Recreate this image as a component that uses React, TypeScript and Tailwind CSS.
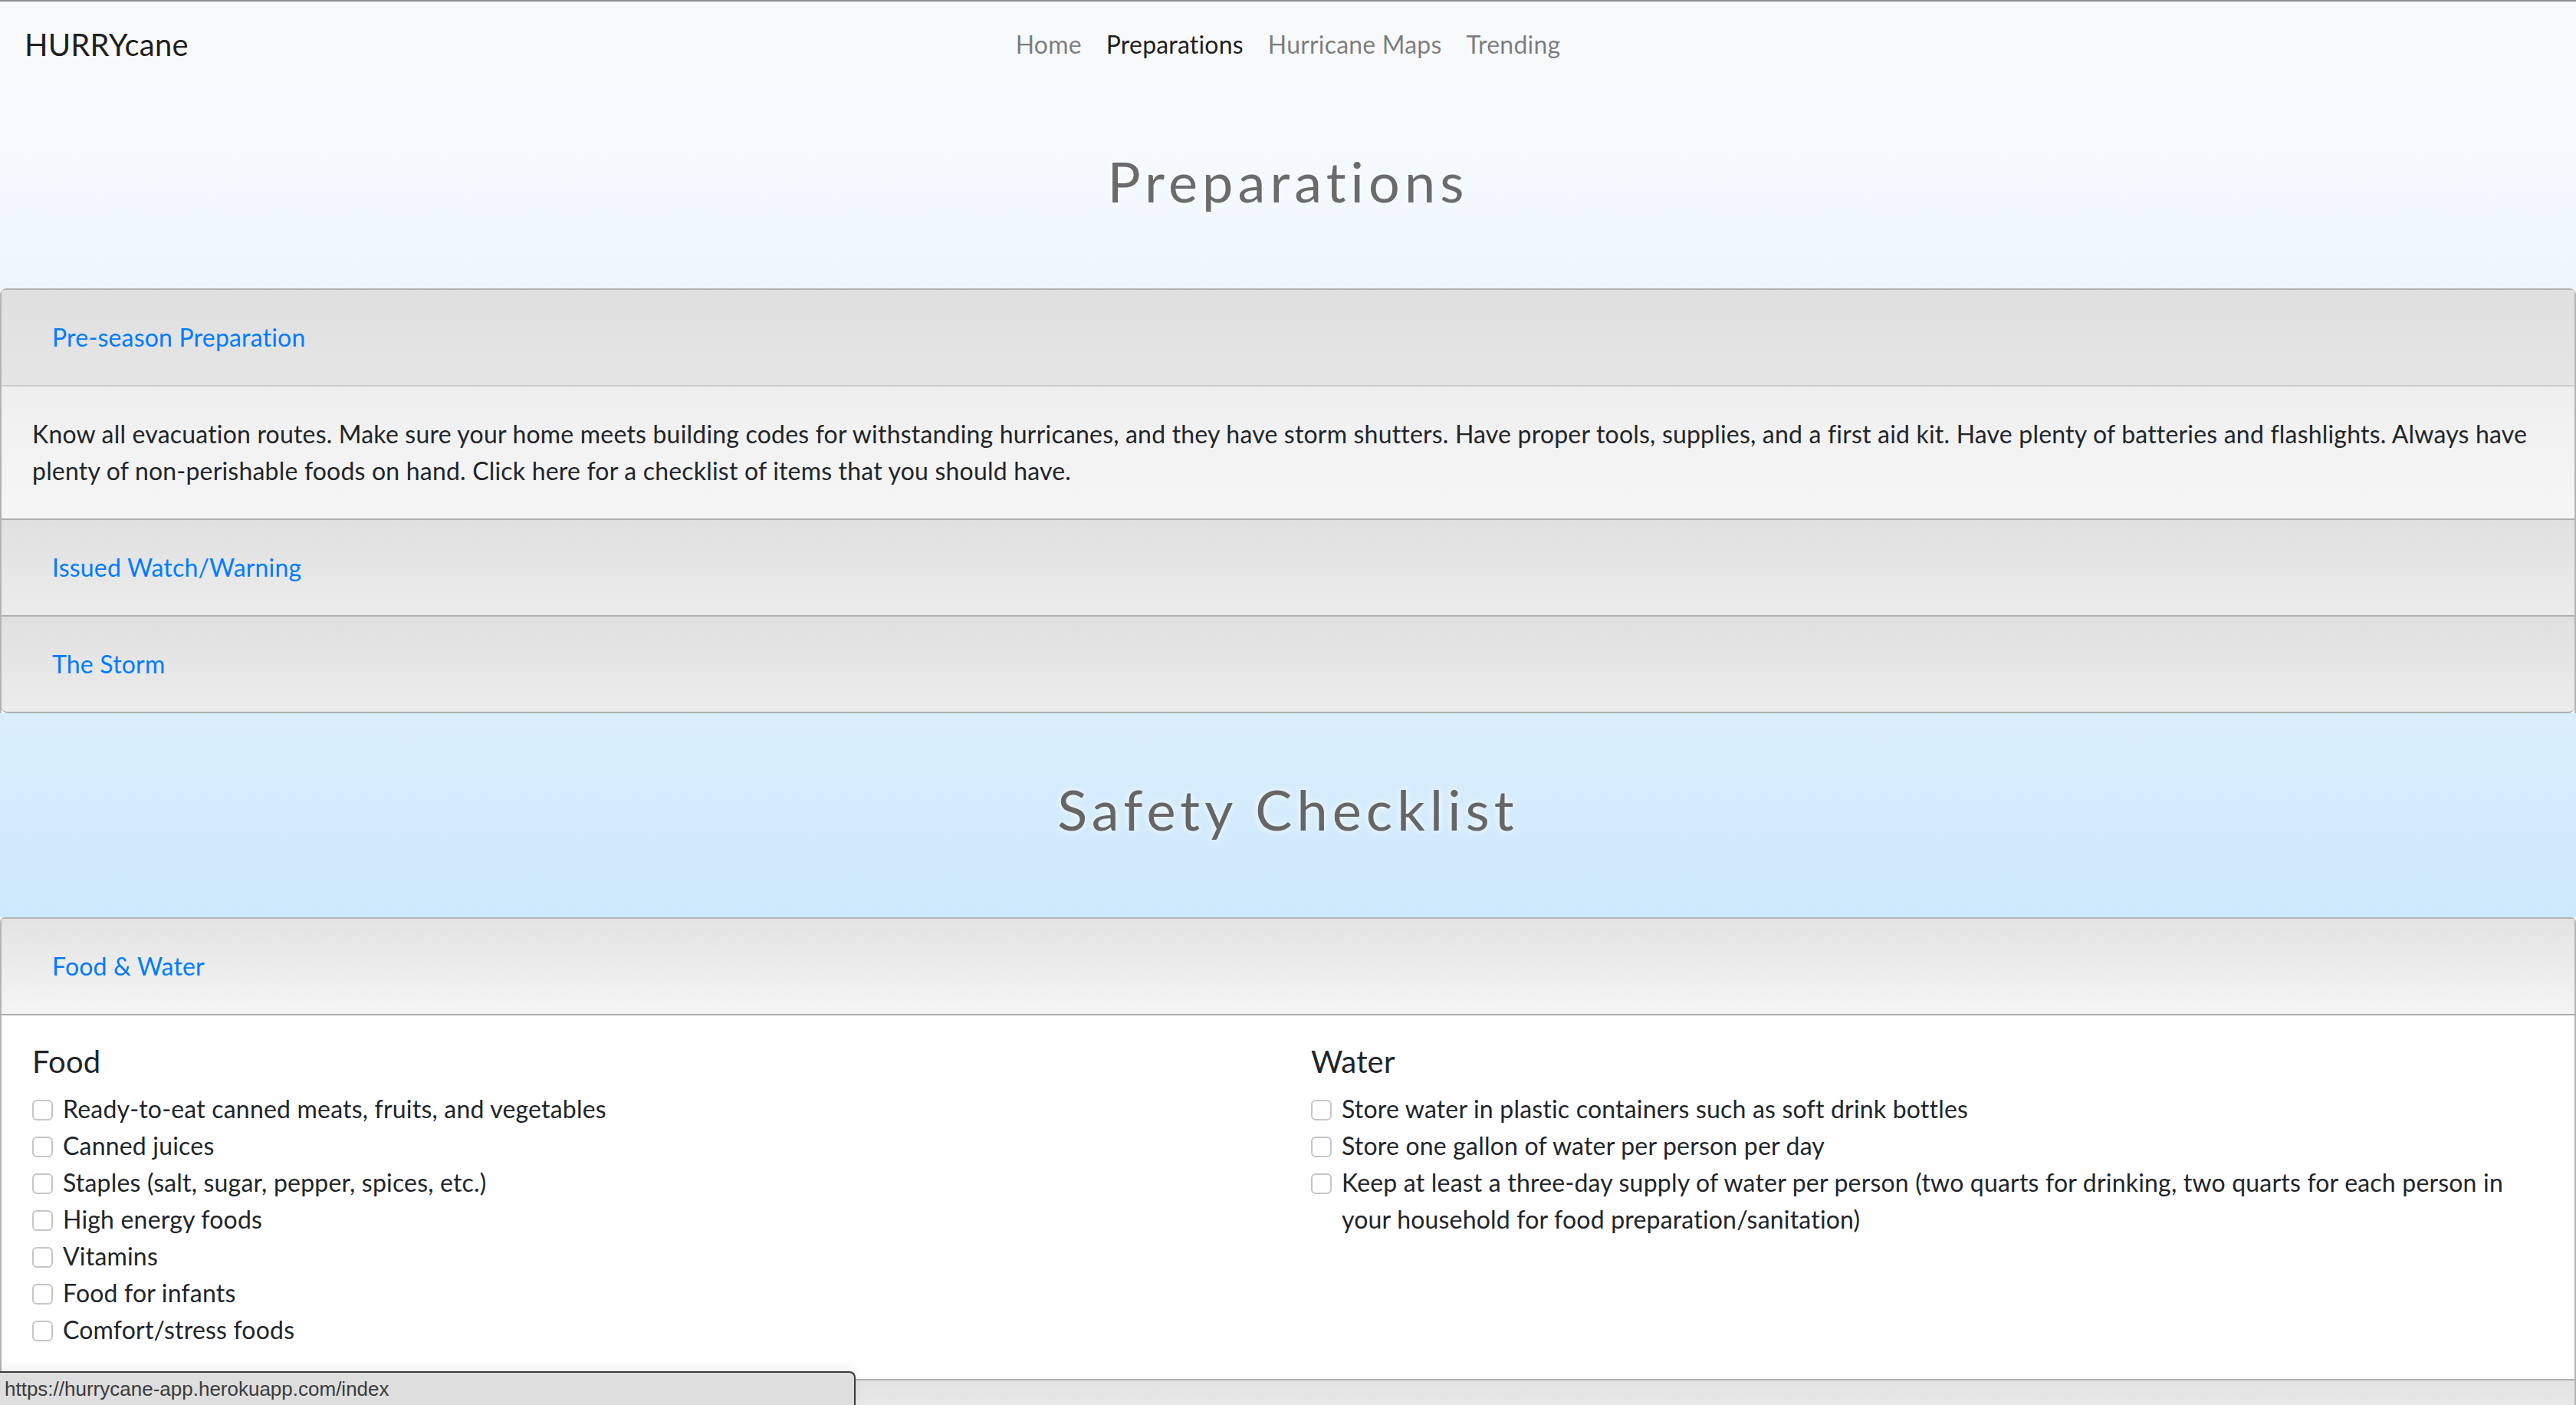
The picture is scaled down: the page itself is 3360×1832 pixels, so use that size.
import React from 'react';

const font = "font-['Lato',sans-serif]";

const foodItems = [
  'Ready-to-eat canned meats, fruits, and vegetables',
  'Canned juices',
  'Staples (salt, sugar, pepper, spices, etc.)',
  'High energy foods',
  'Vitamins',
  'Food for infants',
  'Comfort/stress foods',
];

const waterItems = [
  'Store water in plastic containers such as soft drink bottles',
  'Store one gallon of water per person per day',
  'Keep at least a three-day supply of water per person (two quarts for drinking, two quarts for each person in your household for food preparation/sanitation)',
];

function CheckItem({ label }: { label: string }) {
  return (
    <label className="flex items-start gap-[13px] text-[32px] leading-[48px] text-[#212529]">
      <span className="mt-[12px] h-[27px] w-[27px] shrink-0 rounded-[6px] border-2 border-[#c6c6c6] bg-white" />
      <span>{label}</span>
    </label>
  );
}

function CardHeader({ title, className = '' }: { title: string; className?: string }) {
  return (
    <div className={`flex h-[126px] items-center pl-[66px] text-[32px] text-[#007bff] ${className}`}>
      {title}
    </div>
  );
}

export default function App() {
  return (
    <div className={`relative h-[1832px] overflow-hidden border-t-2 border-[#8e8e8e] bg-white tracking-[0.012em] ${font}`}>
      {/* navbar */}
      <nav className="grid h-[112px] grid-cols-[1fr_auto_1fr] items-center bg-[#f8f9fa] px-[32px]">
        <span className="text-[40px] text-black/90">HURRYcane</span>
        <ul className="flex text-[32px]">
          <li className="px-[16px] text-black/50">Home</li>
          <li className="px-[16px] text-black/90">Preparations</li>
          <li className="px-[16px] text-black/50">Hurricane Maps</li>
          <li className="px-[16px] text-black/50">Trending</li>
        </ul>
        <span />
      </nav>

      {/* preparations hero */}
      <section className="flex h-[262px] items-center justify-center bg-gradient-to-b from-[#f9fcff] to-[#eef6fd]">
        <h1 className="pb-[18px] text-[72px] tracking-[0.085em] text-[#6b6b6b] [text-shadow:0_0_8px_#ffffff]">Preparations</h1>
      </section>

      {/* accordion */}
      <div className="rounded-t-[8px] border-x-2 border-t-2 border-[#b4b4b4]">
        <CardHeader title="Pre-season Preparation" className="border-b-2 border-[#cbcbcb] bg-gradient-to-b from-[#dfdfdf] to-[#e6e6e6]" />
        <div className="border-b-2 border-[#b0b0b0] bg-gradient-to-b from-[#efefef] to-[#f6f6f6] px-[40px] py-[38px] text-[32px] leading-[48px] text-[#212529]">
          Know all evacuation routes. Make sure your home meets building codes for withstanding hurricanes, and they have storm shutters. Have proper tools, supplies, and a first aid kit. Have plenty of batteries and flashlights. Always have plenty of non-perishable foods on hand. Click here for a checklist of items that you should have.
        </div>
        <CardHeader title="Issued Watch/Warning" className="border-b-2 border-[#b0b0b0] bg-gradient-to-b from-[#e0e0e0] to-[#ececec]" />
        <CardHeader title="The Storm" className="rounded-b-[8px] border-b-2 border-[#b0b0b0] bg-gradient-to-b from-[#e0e0e0] to-[#ececec]" />
      </div>

      {/* safety checklist */}
      <section className="flex h-[266px] items-center justify-center bg-gradient-to-b from-[#daeefc] to-[#cee9fd]">
        <h2 className="pb-[16px] text-[72px] tracking-[0.085em] text-[#666666] [text-shadow:0_0_10px_#ffffff]">Safety Checklist</h2>
      </section>

      <div className="rounded-t-[6px] border-x-2 border-t-2 border-[#b4b4b4]">
        <CardHeader title="Food & Water" className="border-b-2 border-[#ababab] bg-gradient-to-b from-[#e3e3e3] to-[#f5f5f5]" />
        <div className="grid grid-cols-2 gap-x-[60px] border-b-2 border-[#b0b0b0] px-[40px] pt-[36px] pb-[40px]">
          <div>
            <h5 className="mb-[14px] text-[40px] leading-[48px] text-[#212529]">Food</h5>
            {foodItems.map((item) => (
              <CheckItem key={item} label={item} />
            ))}
          </div>
          <div>
            <h5 className="mb-[14px] text-[40px] leading-[48px] text-[#212529]">Water</h5>
            {waterItems.map((item) => (
              <CheckItem key={item} label={item} />
            ))}
          </div>
        </div>
        {/* next card header, mostly below the fold */}
        <div className="h-[126px] bg-gradient-to-b from-[#e3e3e3] to-[#f5f5f5]" />
      </div>

      {/* browser status bar */}
      <div className="absolute bottom-0 left-0 flex h-[44px] w-[1116px] items-center rounded-tr-[8px] border-t-2 border-r-2 border-[#3a3a3a] bg-[#dedede] pl-[6px] font-['Liberation_Sans',sans-serif] text-[26px] leading-none tracking-normal text-[#3a3a3a] shadow-[0_-6px_14px_rgba(0,0,0,0.06)]">
        https://hurrycane-app.herokuapp.com/index
      </div>
    </div>
  );
}
